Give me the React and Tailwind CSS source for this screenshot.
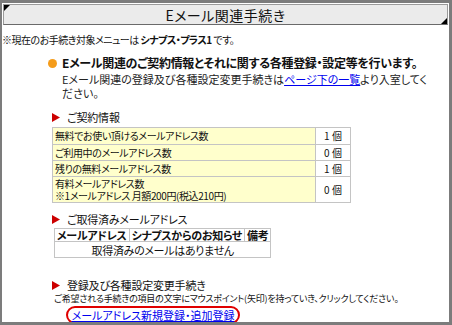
import React from 'react';

const Tri = () => (
  <svg width="8" height="9" viewBox="0 0 8 9" className="mr-[7px] shrink-0">
    <polygon points="0,0 8,4.5 0,9" fill="#cc0000" />
  </svg>
);

const contracts = [
  { label: '無料でお使い頂けるメールアドレス数', count: '1 個', h: 'h-[17px]' },
  { label: 'ご利用中のメールアドレス数', count: '0 個', h: 'h-[16px]' },
  { label: '残りの無料メールアドレス数', count: '1 個', h: 'h-[16px]' },
  { label: '有料メールアドレス数', sub: '※1メールアドレス 月額200円(税込210円)', count: '0 個', h: 'h-[26px]' },
];

export default function App() {
  return (
    <div className="w-[452px] h-[325px] overflow-hidden bg-white border-[#7c7c7c] border-t-[3px] border-l-[2px] border-r-[3px] border-b-[3px] text-[#111] font-['Noto_Sans_CJK_JP','Noto_Sans',sans-serif] [font-feature-settings:'palt']">
      {/* タイトル */}
      <div className="relative mx-[1px] mt-[1px] h-[21px] bg-[#ebebeb] border border-[#9a9a9a] border-b-[#6a6a6a] flex items-center justify-center">
        <div className="absolute left-0 top-0 w-0 h-0 border-t-[6px] border-t-black border-r-[6px] border-r-transparent" />
        <div className="absolute right-0 bottom-0 w-0 h-0 border-b-[6px] border-b-black border-l-[6px] border-l-transparent" />
        <span className="text-[14px] leading-none tracking-[0.5px]">Eメール関連手続き</span>
      </div>

      <p className="mt-[9px] text-[10px] leading-[12px] tracking-[-0.5px] whitespace-nowrap">
        ※現在のお手続き対象メニューは <b>シナプス・プラス1</b> です。
      </p>

      {/* 説明 */}
      <div className="mt-[10px] ml-[46px] flex items-start">
        <span className="mt-[3px] mr-[5px] w-[9px] h-[9px] rounded-full bg-[#f59c1a] shrink-0" />
        <div>
          <p className="text-[12px] leading-[14px] font-bold tracking-[-0.3px] whitespace-nowrap">
            Eメール関連のご契約情報とそれに関する各種登録・設定等を行います。
          </p>
          <p className="mt-[2px] text-[11px] leading-[14px] text-[#222] whitespace-nowrap">
            Eメール関連の登録及び各種設定変更手続きは
            <a href="#" className="text-[#0000ee] underline">ページ下の一覧</a>
            より入室してく
            <br />
            ださい。
          </p>
        </div>
      </div>

      {/* ご契約情報 */}
      <div className="mt-[10px] ml-[50px] flex items-center h-[14px]">
        <Tri />
        <span className="text-[11px] leading-none tracking-[-0.2px]">ご契約情報</span>
      </div>
      <table className="mt-[3px] ml-[50px] w-[299px] border-collapse text-[10px] leading-[12px] tracking-[-0.4px]">
        <tbody>
          {contracts.map((r) => (
            <tr key={r.label} className={r.h}>
              <td className="bg-[#ffffcc] border border-[#c4c4c4] pl-[2px] py-0 align-middle">
                <div>{r.label}</div>
                {r.sub && <div className="leading-[11px]">{r.sub}</div>}
              </td>
              <td className="w-[35px] border border-[#c4c4c4] text-center tracking-normal align-middle">{r.count}</td>
            </tr>
          ))}
        </tbody>
      </table>

      {/* ご取得済みメールアドレス */}
      <div className="mt-[9px] ml-[50px] flex items-center h-[14px]">
        <Tri />
        <span className="text-[11px] leading-none tracking-[-0.2px]">ご取得済みメールアドレス</span>
      </div>
      <table className="mt-[2px] ml-[52px] border-collapse text-[11px] leading-[12px] tracking-[-0.3px]">
        <tbody>
          <tr className="h-[13px] font-bold">
            <td className="border border-[#c4c4c4] px-[2px] whitespace-nowrap">メールアドレス</td>
            <td className="border border-[#c4c4c4] px-[2px] whitespace-nowrap">シナプスからのお知らせ</td>
            <td className="border border-[#c4c4c4] px-[2px] whitespace-nowrap">備考</td>
          </tr>
          <tr className="h-[16px]">
            <td colSpan={3} className="border border-[#c4c4c4] text-center">取得済みのメールはありません</td>
          </tr>
        </tbody>
      </table>

      {/* 登録及び各種設定変更手続き */}
      <div className="mt-[20px] ml-[50px] flex items-center h-[14px]">
        <Tri />
        <span className="text-[11px] leading-none tracking-[-0.2px]">登録及び各種設定変更手続き</span>
      </div>
      <p className="ml-[52px] mt-[1px] text-[9px] leading-[12px] tracking-[-0.2px] whitespace-nowrap">
        ご希望される手続きの項目の文字にマウスポイント(矢印)を持っていき、クリックしてください。
      </p>
      <div className="ml-[64px] mt-[1px] w-[174px] h-[18px] rounded-full border-2 border-[#e00000] flex items-center justify-center">
        <a href="#" className="text-[11px] leading-none text-[#0000ee] underline whitespace-nowrap">
          メールアドレス新規登録・追加登録
        </a>
      </div>
    </div>
  );
}
